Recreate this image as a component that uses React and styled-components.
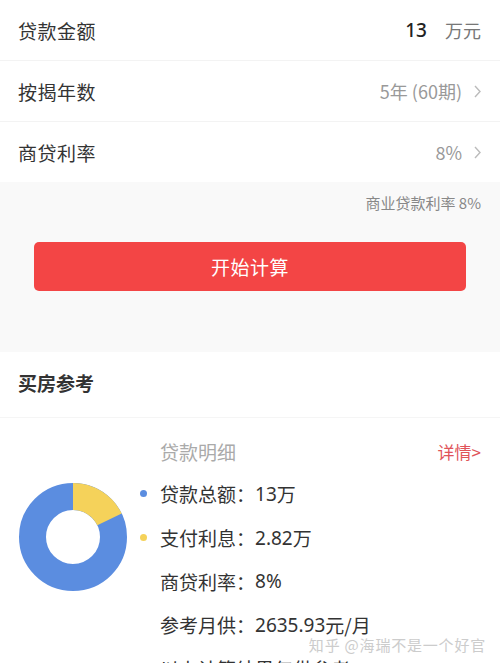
import React from 'react';
import styled, { createGlobalStyle } from 'styled-components';

const GlobalStyle = createGlobalStyle`
  body {
    margin: 0;
    background: #fff;
    font-family: "Noto Sans CJK SC", "Noto Sans", sans-serif;
    color: #333;
  }
`;

const Page = styled.div`
  width: 500px;
  height: 663px;
  overflow: hidden;
  background: #fff;
`;

const FormList = styled.div`
  background: #fff;
`;

const FormRow = styled.div`
  height: ${(p) => (p.last ? '60px' : '61px')};
  padding: 0 19px 0 18px;
  display: flex;
  align-items: center;
  justify-content: space-between;
  border-bottom: ${(p) => (p.last ? 'none' : '1px solid #f3f3f3')};
  box-sizing: border-box;
`;

const RowLabel = styled.span`
  font-size: 19px;
  color: #333;
  letter-spacing: 0.5px;
`;

const RowValue = styled.span`
  display: flex;
  align-items: center;
  font-size: 18px;
  color: #999;
`;

const Amount = styled.span`
  font-family: "Noto Sans", sans-serif;
  font-size: 19px;
  font-weight: 500;
  color: #222;
  margin-right: 18px;
`;

const Unit = styled.span`
  font-size: 18px;
  color: #777;
`;

const ChevronIcon = styled.svg`
  margin-left: 12px;
  flex: none;
`;

const GrayArea = styled.div`
  background: #f9f9f9;
  padding: 10px 19px 0 18px;
  height: 170px;
  box-sizing: border-box;
  display: flex;
  flex-direction: column;
`;

const RateNote = styled.div`
  align-self: flex-end;
  font-size: 15px;
  line-height: 22px;
  color: #888;
`;

const CalcButton = styled.button`
  margin: 28px 15px 0 16px;
  height: 49px;
  border: none;
  border-radius: 5px;
  background: #f34545;
  color: #fff;
  font-family: inherit;
  font-size: 19px;
  letter-spacing: 0.5px;
`;

const SectionHeader = styled.div`
  height: 66px;
  padding: 0 18px 4px;
  box-sizing: border-box;
  display: flex;
  align-items: center;
  font-size: 19px;
  font-weight: 600;
  color: #333;
  border-bottom: 1px solid #f5f5f5;
`;

const Detail = styled.div`
  padding: 16px 19px 0 18px;
  display: grid;
  grid-template-columns: 124px 1fr;
  position: relative;
`;

const DetailHead = styled.div`
  grid-column: 2;
  display: flex;
  justify-content: space-between;
  align-items: center;
  padding-left: 18px;
  height: 34px;
`;

const DetailTitle = styled.span`
  font-size: 19px;
  color: #aaa;
`;

const DetailLink = styled.span`
  font-size: 17px;
  color: #e0545a;
`;

const ChartCell = styled.div`
  grid-column: 1;
  padding-top: 14px;
`;

const Lines = styled.div`
  grid-column: 2;
  display: flex;
  flex-direction: column;
  padding-top: 4px;
`;

const Line = styled.div`
  height: 43.7px;
  display: flex;
  align-items: center;
  font-size: 19px;
  color: #333;
  position: relative;
  padding-left: 18px;
  white-space: nowrap;
`;

const Dot = styled.span`
  position: absolute;
  left: -2px;
  width: 7px;
  height: 7px;
  border-radius: 50%;
  background: ${(p) => p.color};
`;

const Num = styled.span`
  font-family: "Noto Sans", sans-serif;
`;

const Watermark = styled.div`
  position: absolute;
  right: 14px;
  top: 216px;
  font-size: 15px;
  letter-spacing: 0.8px;
  color: #ccc;
`;

function Chevron() {
  return (
    <ChevronIcon width="7" height="13" viewBox="0 0 7 13">
      <polyline points="1,1 6,6.5 1,12" fill="none" stroke="#bbb" strokeWidth="1.4" />
    </ChevronIcon>
  );
}

function Donut() {
  const cx = 55;
  const cy = 55;
  const r = 40.5;
  const sw = 27;
  const c = 2 * Math.PI * r;
  const share = 2.82 / (13 + 2.82);
  return (
    <svg width="110" height="110" viewBox="0 0 110 110">
      <circle cx={cx} cy={cy} r={r} fill="none" stroke="#5b8de0" strokeWidth={sw} />
      <circle
        cx={cx}
        cy={cy}
        r={r}
        fill="none"
        stroke="#f5d25a"
        strokeWidth={sw}
        strokeDasharray={`${c * share} ${c}`}
        transform={`rotate(-90 ${cx} ${cy})`}
      />
    </svg>
  );
}

export default function App() {
  return (
    <Page>
      <GlobalStyle />
      <FormList>
        <FormRow>
          <RowLabel>贷款金额</RowLabel>
          <RowValue>
            <Amount>13</Amount>
            <Unit>万元</Unit>
          </RowValue>
        </FormRow>
        <FormRow>
          <RowLabel>按揭年数</RowLabel>
          <RowValue>
            5年 (60期)
            <Chevron />
          </RowValue>
        </FormRow>
        <FormRow last>
          <RowLabel>商贷利率</RowLabel>
          <RowValue>
            8%
            <Chevron />
          </RowValue>
        </FormRow>
      </FormList>

      <GrayArea>
        <RateNote>商业贷款利率 8%</RateNote>
        <CalcButton>开始计算</CalcButton>
      </GrayArea>

      <SectionHeader>买房参考</SectionHeader>

      <Detail>
        <DetailHead>
          <DetailTitle>贷款明细</DetailTitle>
          <DetailLink>详情&gt;</DetailLink>
        </DetailHead>
        <ChartCell>
          <Donut />
        </ChartCell>
        <Lines>
          <Line>
            <Dot color="#5b8de0" />
            贷款总额：<Num>13</Num>万
          </Line>
          <Line>
            <Dot color="#f5d25a" />
            支付利息：<Num>2.82</Num>万
          </Line>
          <Line>
            商贷利率：<Num>8%</Num>
          </Line>
          <Line>
            参考月供：<Num>2635.93</Num>元/月
          </Line>
          <Line>以上计算结果仅供参考</Line>
        </Lines>
        <Watermark>知乎 @海瑞不是一个好官</Watermark>
      </Detail>
    </Page>
  );
}
